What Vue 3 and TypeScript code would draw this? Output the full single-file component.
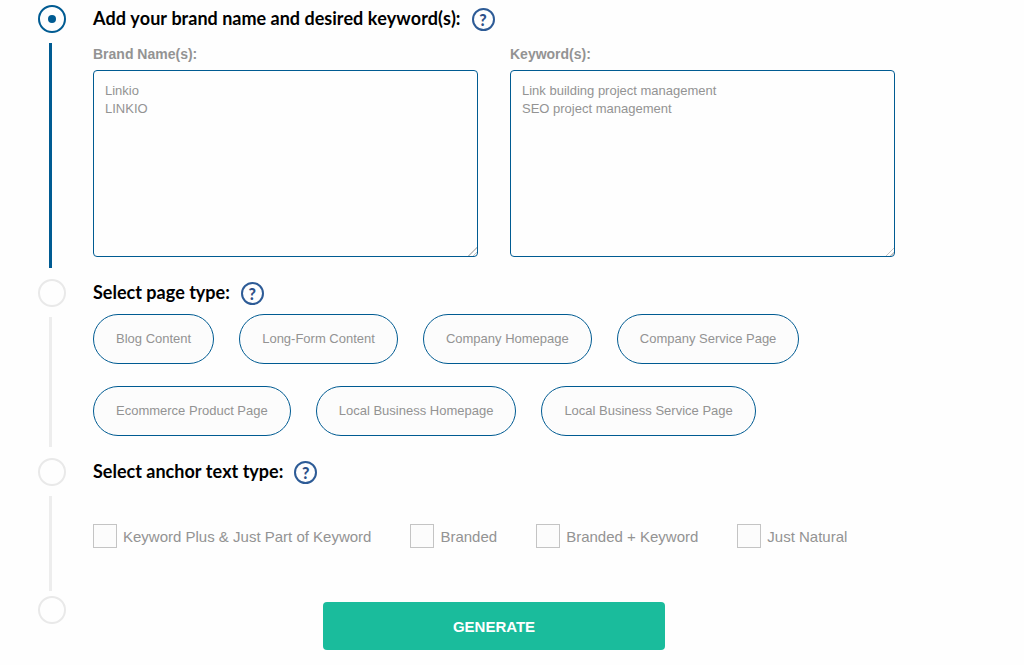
<script setup lang="ts">
import { ref } from 'vue'

const brandNames = ref('')
const keywords = ref('')
const pageType = ref('')
const anchorTypes = ref<string[]>([])

const pageTypeRows: string[][] = [
  ['Blog Content', 'Long-Form Content', 'Company Homepage', 'Company Service Page'],
  ['Ecommerce Product Page', 'Local Business Homepage', 'Local Business Service Page'],
]
const anchorOptions: string[] = [
  'Keyword Plus & Just Part of Keyword',
  'Branded',
  'Branded + Keyword',
  'Just Natural',
]
</script>

<template>
  <form class="generator" @submit.prevent>
    <section class="step active">
      <div class="rail"><span class="marker"></span><span class="line"></span></div>
      <div class="content">
        <div class="heading">
          <h2>Add your brand name and desired keyword(s):</h2>
          <button type="button" class="help" aria-label="Help with names and keywords">?</button>
        </div>
        <div class="fields">
          <div class="field">
            <label for="brands">Brand Name(s):</label>
            <textarea id="brands" v-model="brandNames" placeholder="Linkio&#10;LINKIO"></textarea>
          </div>
          <div class="field">
            <label for="keywords">Keyword(s):</label>
            <textarea
              id="keywords"
              v-model="keywords"
              placeholder="Link building project management&#10;SEO project management"
            ></textarea>
          </div>
        </div>
      </div>
    </section>

    <section class="step">
      <div class="rail"><span class="marker"></span><span class="line"></span></div>
      <div class="content">
        <div class="heading">
          <h2>Select page type:</h2>
          <button type="button" class="help" aria-label="Help with page types">?</button>
        </div>
        <div class="pills">
          <div v-for="(row, i) in pageTypeRows" :key="i" class="pill-row">
            <button
              v-for="name in row"
              :key="name"
              type="button"
              class="pill"
              :class="{ chosen: pageType === name }"
              @click="pageType = name"
            >
              {{ name }}
            </button>
          </div>
        </div>
      </div>
    </section>

    <section class="step anchors">
      <div class="rail"><span class="marker"></span><span class="line"></span></div>
      <div class="content">
        <div class="heading">
          <h2>Select anchor text type:</h2>
          <button type="button" class="help" aria-label="Help with anchor text types">?</button>
        </div>
        <div class="checks">
          <label v-for="option in anchorOptions" :key="option" class="check">
            <input v-model="anchorTypes" type="checkbox" :value="option" />
            <span>{{ option }}</span>
          </label>
        </div>
      </div>
    </section>

    <section class="step last">
      <div class="rail"><span class="marker"></span></div>
      <div class="content">
        <button type="submit" class="generate">GENERATE</button>
      </div>
    </section>
  </form>
</template>

<style>
body {
  background: #fefefe;
}
</style>

<style scoped>
.generator {
  padding: 5px 129px 15px 38px;
  font-family: "Liberation Sans", Arial, sans-serif;
  color: #939393;
}

.step {
  display: flex;
  gap: 27px;
}

.rail {
  display: flex;
  flex-direction: column;
  flex: none;
  width: 28px;
}

.marker {
  display: flex;
  align-items: center;
  justify-content: center;
  box-sizing: border-box;
  width: 28px;
  height: 28px;
  border: 2px solid #e9e9e9;
  border-radius: 50%;
}

.line {
  flex: 1;
  width: 3px;
  margin: 10px 0 11px 11px;
  background: #ededed;
}

.active .marker {
  border-color: #005b92;
}

.active .marker::after {
  content: "";
  width: 8px;
  height: 8px;
  border-radius: 50%;
  background: #005b92;
}

.active .line {
  background: #005b92;
}

.content {
  flex: 1;
  min-width: 0;
  padding-bottom: 22px;
}

.heading {
  display: flex;
  gap: 11px;
  height: 28px;
}

h2 {
  margin: 0;
  font: bold 18px/26px Lato, sans-serif;
  font-kerning: none;
  color: #000;
}

.help {
  box-sizing: border-box;
  width: 23px;
  height: 23px;
  margin-top: 3px;
  padding: 0;
  border: 2px solid #2d5b96;
  border-radius: 50%;
  background: transparent;
  font: 900 16px/18px Lato, sans-serif;
  color: #2d5089;
}

.fields {
  display: grid;
  grid-template-columns: 1fr 1fr;
  gap: 32px;
  padding-top: 12px;
}

.field label {
  display: block;
  margin-bottom: 7px;
  font-size: 14px;
  font-weight: bold;
  line-height: 18px;
}

textarea {
  display: block;
  box-sizing: border-box;
  width: 100%;
  height: 187px;
  padding: 11px;
  border: 1px solid #005b92;
  border-radius: 4px;
  background: #fefefe;
  font: 13px/18px "Liberation Sans", Arial, sans-serif;
  color: #939393;
}

textarea::placeholder {
  color: #939393;
  opacity: 1;
}

textarea::-webkit-resizer {
  background: linear-gradient(135deg, transparent 70%, #c4c4c4 70% 76%, transparent 76% 84%, #c4c4c4 84% 90%, transparent 90%);
}

.pills {
  display: grid;
  gap: 22px;
  padding-top: 7px;
}

.pill-row {
  display: flex;
  flex-wrap: wrap;
  gap: 22px 25px;
}

.pill {
  height: 50px;
  padding: 0 22px;
  border: 1px solid #005b92;
  border-radius: 25px;
  background: #fcfcfc;
  font: 13px/18px "Liberation Sans", Arial, sans-serif;
  color: #939393;
}

.pill.chosen {
  background: #005b92;
  color: #fff;
}

.checks {
  display: flex;
  flex-wrap: wrap;
  gap: 12px 39px;
  padding-top: 38px;
}

.check {
  display: flex;
  align-items: center;
  gap: 6px;
  font-size: 15px;
}

.check span {
  padding-top: 2px;
  line-height: 22px;
}

.check input {
  appearance: none;
  width: 24px;
  height: 24px;
  margin: 0;
  border: 1px solid #c4c4c4;
  background: #fcfcfc;
}

.check input:checked {
  background: #005b92;
}

.anchors .content {
  padding-bottom: 48px;
}

.anchors .line {
  margin-bottom: 5px;
}

.last .content {
  padding: 6px 0 0;
}

.generate {
  display: block;
  width: 342px;
  max-width: 100%;
  height: 48px;
  margin: 0 auto;
  padding: 2px 0 0;
  border: 0;
  border-radius: 4px;
  background: #1abc9c;
  font: bold 15px/20px "Liberation Sans", Arial, sans-serif;
  color: #fff;
}
</style>
